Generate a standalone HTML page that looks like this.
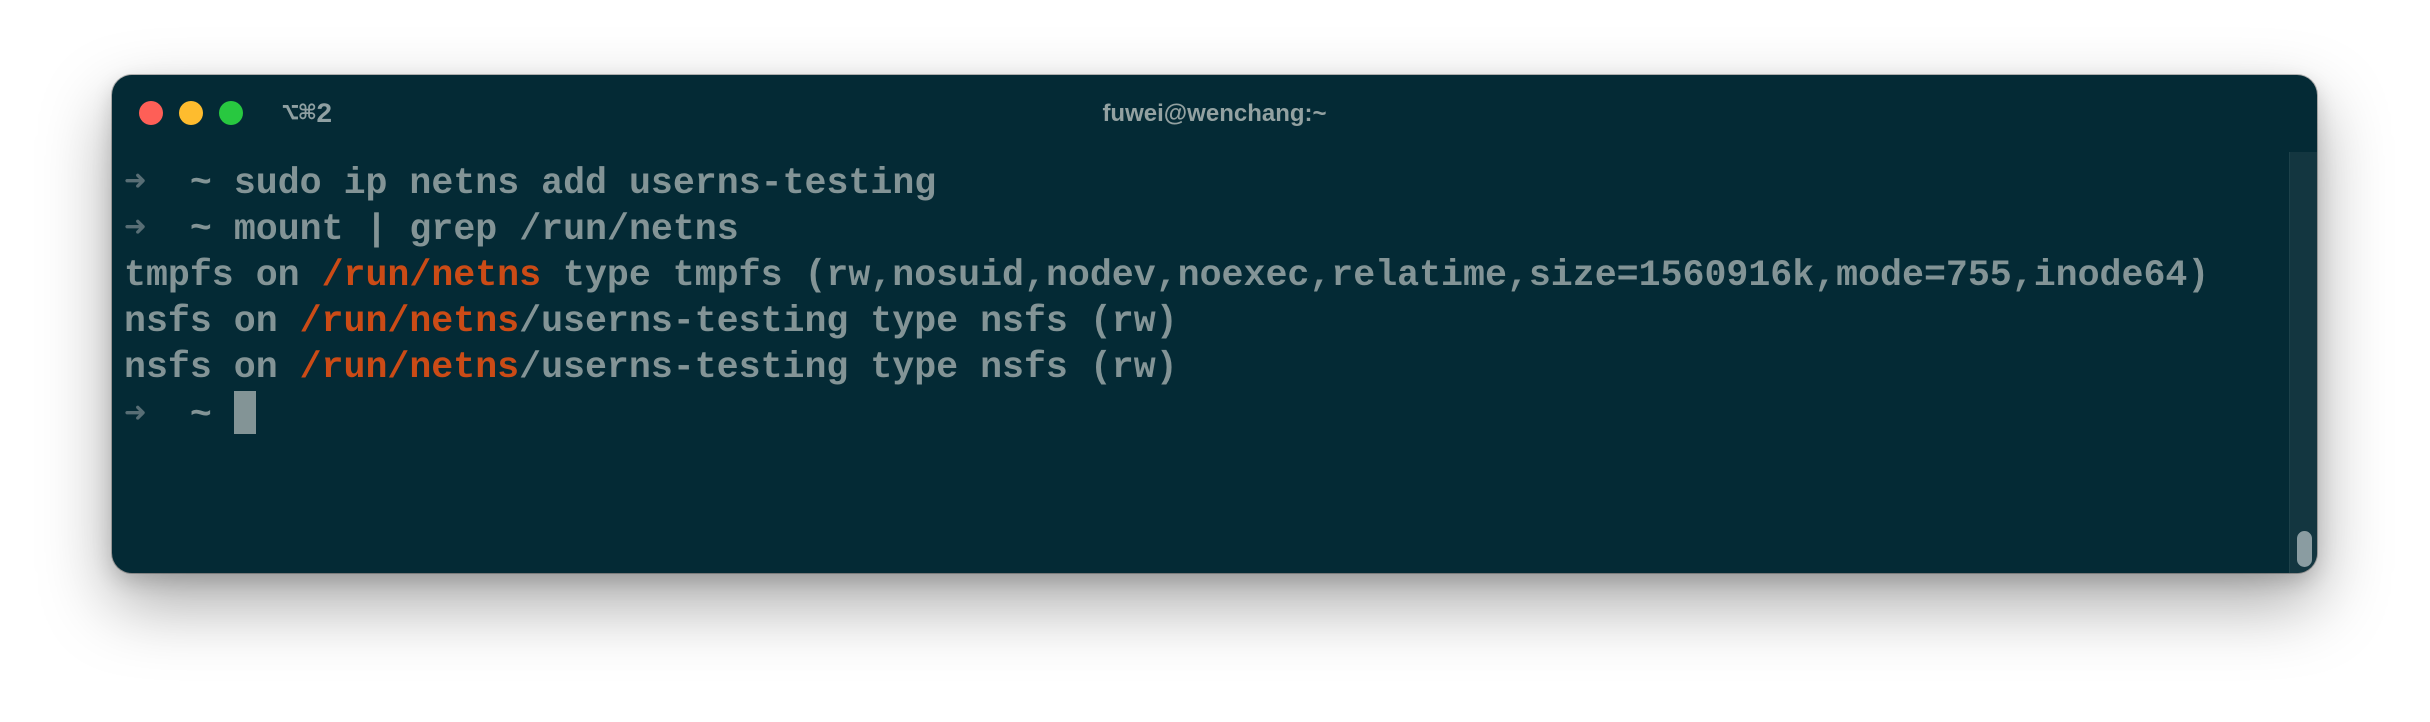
<!DOCTYPE html>
<html><head><meta charset="utf-8"><style>
html,body{margin:0;padding:0;background:#fff;width:2430px;height:722px;overflow:hidden}
.win{position:absolute;left:112px;top:75px;width:2205px;height:498px;background:#042a35;border-radius:20px;
box-shadow:0 0 0 1px rgba(0,0,0,.25),0 30px 70px rgba(0,0,0,.35),0 8px 20px rgba(0,0,0,.15);overflow:hidden}
.l{position:absolute;top:26px;width:24px;height:24px;border-radius:50%}
.tab{position:absolute;left:170px;top:21px;font:bold 28px "Liberation Mono","DejaVu Sans Mono",monospace;color:#8fa0a2}
.title{position:absolute;left:0;right:0;top:25px;text-align:center;font:bold 24px "Liberation Sans",sans-serif;color:#93a1a1}
.term{position:absolute;left:12px;top:86px;font:bold 36.6px/46px "Liberation Mono","DejaVu Sans Mono",monospace;color:#839496;white-space:pre}
.o{color:#cb4b16}.a{color:#586e75}
.cur{display:inline-block;width:22px;height:43px;background:#839496;vertical-align:-9px}
.track{position:absolute;left:2177px;top:77px;width:28px;bottom:0;background:#133640;border-left:1px solid #1d414a}
.thumb{position:absolute;left:7px;bottom:6px;width:15px;height:36px;border-radius:8px;background:#8a9ca1}
</style></head><body>
<div class="win">
<div class="l" style="left:27px;background:#fe5f57"></div>
<div class="l" style="left:67px;background:#febc2e"></div>
<div class="l" style="left:107px;background:#28c840"></div>
<div class="tab">⌥⌘2</div>
<div class="title">fuwei@wenchang:~</div>
<div class="term"><span class="a">➜</span>  ~ sudo ip netns add userns-testing
<span class="a">➜</span>  ~ mount | grep /run/netns
tmpfs on <span class="o">/run/netns</span> type tmpfs (rw,nosuid,nodev,noexec,relatime,size=1560916k,mode=755,inode64)
nsfs on <span class="o">/run/netns</span>/userns-testing type nsfs (rw)
nsfs on <span class="o">/run/netns</span>/userns-testing type nsfs (rw)
<span class="a">➜</span>  ~ <span class="cur"></span></div>
<div class="track"><div class="thumb"></div></div>
</div>
</body></html>
